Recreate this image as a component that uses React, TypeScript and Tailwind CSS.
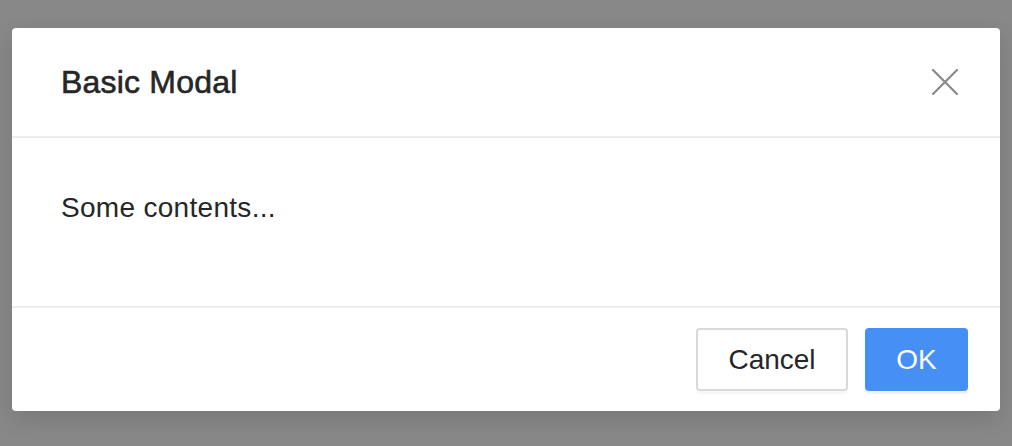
export default function App() {
  return (
    <div
      className="h-[446px] w-full bg-[#888888] px-[12px] pt-[28px]"
      style={{ fontFamily: '"Liberation Sans", Arial, sans-serif' }}
    >
      <div className="w-[988px] rounded-[4px] bg-white shadow-[0_8px_24px_rgba(0,0,0,0.12)]">
        {/* Header */}
        <div className="flex h-[110px] items-center justify-between border-b-2 border-[#ececec] pl-[49px] pr-[40px]">
          <h2 className="text-[32px] font-medium leading-[44px] tracking-[0.2px] text-[#262626] [-webkit-text-stroke:0.6px_#262626]">
            Basic Modal
          </h2>
          <button className="flex h-[30px] w-[30px] items-center justify-center">
            <svg width="26" height="26" viewBox="0 0 26 26">
              <path
                d="M1 1 L25 25 M25 1 L1 25"
                stroke="#8a8a8a"
                strokeWidth="2.2"
                strokeLinecap="round"
              />
            </svg>
          </button>
        </div>

        {/* Body */}
        <div className="h-[168px] pl-[49px] pt-[48px]">
          <p className="text-[28px] leading-[44px] tracking-[0.3px] text-[#262626]">
            Some contents...
          </p>
        </div>

        {/* Footer */}
        <div className="flex h-[105px] items-center justify-end gap-[17px] border-t-2 border-[#ececec] pr-[32px]">
          <button className="h-[63px] w-[152px] rounded-[4px] border-2 border-[#d9d9d9] bg-white text-[28px] text-[#262626] shadow-[0_3px_0_rgba(0,0,0,0.03)]">
            Cancel
          </button>
          <button className="h-[63px] w-[103px] rounded-[4px] bg-[#468ff5] text-[28px] text-white shadow-[0_3px_0_rgba(0,0,0,0.05)]">
            OK
          </button>
        </div>
      </div>
    </div>
  );
}
